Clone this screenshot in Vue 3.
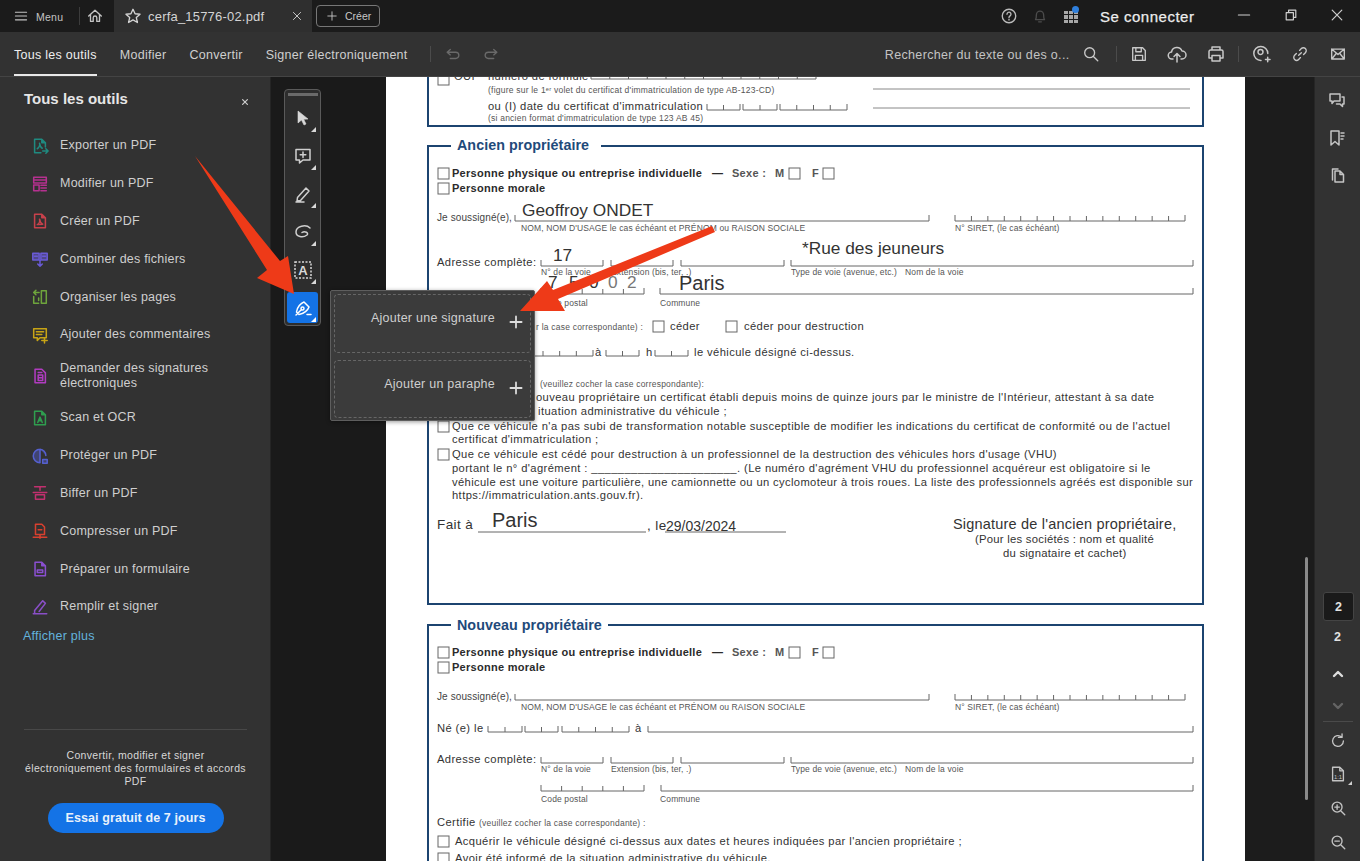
<script setup>
// stroke paths on a 20x20 grid
const icons = {
  home: 'M3 10L10 3.5L17 10M5 8.5V16H8V12a2 2 0 0 1 4 0V16H15V8.5',
  star: 'M10 2.5L12.3 7.5L17.8 8.1L13.7 11.8L14.9 17.2L10 14.4L5.1 17.2L6.3 11.8L2.2 8.1L7.7 7.5Z',
  close: 'M4 4L16 16M16 4L4 16',
  plus: 'M10 3V17M3 10H17',
  menu: 'M2 4.5H18M2 10H18M2 15.5H18',
  help: 'M10 2.5a7.5 7.5 0 1 0 0 15a7.5 7.5 0 1 0 0-15ZM7.8 8a2.2 2.2 0 1 1 3.4 1.8c-.8.5-1.2 1-1.2 1.8M10 13.6v.8',
  bell: 'M5 14c1-1.5 1-3 1-5.5a4 4 0 0 1 8 0c0 2.5 0 4 1 5.5ZM8.5 16.5h3',
  min: 'M3 10H17',
  restore: 'M4 7H13V16H4ZM7 7V4H16V13H13',
  undo: 'M7 5L3.5 8L7 11M3.5 8H13a3.5 3.5 0 0 1 0 7H7',
  redo: 'M13 5L16.5 8L13 11M16.5 8H7a3.5 3.5 0 0 0 0 7H13',
  search: 'M8.5 3a5.5 5.5 0 1 0 0 11a5.5 5.5 0 1 0 0-11ZM12.7 12.7L17.5 17.5',
  save: 'M3 3H14L17 6V17H3ZM6.5 3V7.5H12.5V3M6 17V11.5H14V17',
  cloud: 'M6 15H5a3.5 3.5 0 0 1-.5-7A5.5 5.5 0 0 1 15 7a4 4 0 0 1 0 8h-1M10 18V10M7 12.5L10 9.5L13 12.5',
  print: 'M6 6V3H14V6M6 14H3V7.5A1.5 1.5 0 0 1 4.5 6H15.5A1.5 1.5 0 0 1 17 7.5V14H14M6 11.5H14V17H6Z',
  share: 'M10 16.4a7 7 0 1 1 6.8-7M9.5 5.5a2.5 2.5 0 1 0 0 5a2.5 2.5 0 1 0 0-5ZM14.5 15.5H19M16.7 13.2V17.8',
  link: 'M8.5 11.5L11.5 8.5M9.5 6L11.5 4a3 3 0 0 1 4.5 4.5L14 10.5M10.5 14L8.5 16a3 3 0 0 1-4.5-4.5L6 9.5',
  mail: 'M3 4.5H17V15.5H3ZM3 4.5L10 10.5L17 4.5M3 15.5L8 9.5M17 15.5L12 9.5',
  comments: 'M3 3H13V10H7L5 12.5V10H3ZM15 6H17V13H15.5V15.5L13 13H9.5',
  bookmarks: 'M4 3H12V17L8 13.5L4 17ZM14 5H17M14 8H17M14 11H16',
  pages: 'M8 6H13L16.5 9.5V17H8ZM13 6V9.5H16.5M5.5 15V4H11',
  up: 'M5 12.5L10 7.5L15 12.5',
  down: 'M5 7.5L10 12.5L15 7.5',
  refresh: 'M16 10a6 6 0 1 1-2-4.5M14.5 2V6H10.5',
  fit: 'M4 2.5H12L16 6.5V17.5H4ZM12 2.5V6.5H16',
  zoomIn: 'M9 3.5a5.5 5.5 0 1 0 0 11a5.5 5.5 0 1 0 0-11ZM13 13L17.5 17.5M6.5 9H11.5M9 6.5V11.5',
  zoomOut: 'M9 3.5a5.5 5.5 0 1 0 0 11a5.5 5.5 0 1 0 0-11ZM13 13L17.5 17.5M6.5 9H11.5',
  comment: 'M3 3.5H17V14H10L6.5 17V14H3ZM10 6V11.5M7.2 8.7H12.8',
  pen: 'M4.5 13.5L13 4L16 7L7.5 16.5L4 17ZM3 18H11',
  lasso: 'M17 6C13 2 3 4 3 10C3 15 10 16 14 13C16 11 12 8.5 9 10.5',
  sign: 'M3.5 14C4 9 8 5 11 4L16 9C15 12 11 16 6 16.5ZM3 17L8.5 11.5M9.5 9a1.5 1.5 0 1 0 0 3a1.5 1.5 0 1 0 0-3ZM14 16.5H18'
}

const tools = [
  { label: 'Exporter un PDF', color: '#1f8a80', d: 'M4 2.5H12L16 6.5V11M12 2.5V6.5H16M4 2.5V17.5H11M7 13c2-1 3-4 2.5-6c.5 3 2 5 3 5.5M13 15.5H19M16.5 13L19 15.5L16.5 18' },
  { label: 'Modifier un PDF', color: '#b5318f', d: 'M3 2.5H17V9H3ZM3 11H9V17.5H3ZM11 11.5H17M11 14.5H17M11 17.5H17M3 5.5H17' },
  { label: 'Créer un PDF', color: '#c8414b', d: 'M4 2.5H12L16 6.5V17.5H4ZM12 2.5V6.5H16M7 14c2-1 3-4 2.5-6c.5 3 2 5 3.5 5.5Z' },
  { label: 'Combiner des fichiers', color: '#6a5bd6', tint: 'rgba(106, 91, 214, .55)', d: 'M2 3.5H9V11H2ZM11 3.5H18V11H11ZM4 7H7M13 7H16M10 12V18M7.5 15.5L10 18L12.5 15.5' },
  { label: 'Organiser les pages', color: '#6ea53c', d: 'M11.5 3H17V17H11.5ZM9 5H3M5.5 2.5L3 5L5.5 7.5M3 9.5V17H8.5M8.5 14V11' },
  { label: 'Ajouter des commentaires', color: '#c8a415', d: 'M3 3H17V13H10L7 16V13H3ZM6 6.5H14M6 9.5H12M15 13V19M12 16H18' },
  { label: 'Demander des signatures électroniques', color: '#b13cc0', d: 'M4.5 2.5H12L16 6.5V17.5H4.5ZM8 6H12M8 9H13V15H8ZM8 12H13' },
  { label: 'Scan et OCR', color: '#2f9e4f', d: 'M4 2.5H12L16 6.5V17.5H4ZM12 2.5V6.5H16M7.5 15L10 9L12.5 15M8.5 13H11.5' },
  { label: 'Protéger un PDF', color: '#5560d0', tint: 'rgba(85, 96, 208, .4)', d: 'M10 2.5a7.5 7.5 0 1 0 0 15M10 2.5V17.5M10 2.5a7 7 0 0 1 6.5 7M13 14H18V18H13Z' },
  { label: 'Biffer un PDF', color: '#c2306f', d: 'M4 3H16M10 3V7M2.5 9.5H17.5M5 12H15V17H5Z' },
  { label: 'Compresser un PDF', color: '#d8402f', d: 'M5 2.5H12L15 5.5V14H5ZM8 8.5H12M2.5 17H17.5M10 14V18' },
  { label: 'Préparer un formulaire', color: '#8a4fd0', d: 'M4.5 2.5H12L16 6.5V17.5H4.5ZM12 2.5V6.5H16M7 11H13V14H7Z' },
  { label: 'Remplir et signer', color: '#8a4fc8', d: 'M2.5 17.5H17.5M4 14L13 3L16 6L9 15M4 14V17' }
]

const dockTools = ['cursor', 'comment', 'pen', 'lasso', 'text', 'sign']

// comb fields of the form: x1, x2, y, number of cells
const combs = [
  [591, 816, 79, 12],
  [707, 740, 110, 2], [743, 777, 110, 2], [780, 847, 110, 4],
  [515, 929, 221, 1], [955, 1185, 221, 14],
  [541, 603, 266, 1], [611, 673, 266, 1], [681, 784, 266, 1], [791, 1193, 266, 1],
  [541, 644, 294, 5], [660, 1193, 294, 1],
  [493, 593, 356, 6], [606, 639, 356, 2], [655, 688, 356, 2],
  [515, 929, 700, 1], [955, 1185, 700, 14],
  [488, 522, 732, 2], [525, 558, 732, 2], [562, 629, 732, 4], [648, 1193, 732, 1],
  [541, 603, 763, 1], [611, 673, 763, 1], [681, 784, 763, 1], [791, 1193, 763, 1],
  [541, 644, 791, 5], [661, 1193, 791, 1]
]

const combPath = combs.map(([a, b, y, n]) => {
  let d = `M${a} ${y - 6}V${y}H${b}V${y - 6}`
  for (let i = 1; i < n; i++) {
    const x = a + ((b - a) * i) / n
    d += `M${x} ${y - 5}V${y}`
  }
  return d
}).join('')

const boxes = [
  [438, 74], [438, 168], [438, 183], [789, 168], [823, 168],
  [653, 321], [726, 321], [438, 421], [438, 449],
  [438, 647], [438, 662], [789, 647], [823, 647], [438, 836], [438, 853]
]

// x, vertical centre of the line, text, style
const texts = [
  [454, 76, 'OUI', 'n'],
  [488, 76, 'numéro de formule', 'n'],
  [488, 90, "(figure sur le 1ᵉʳ volet du certificat d'immatriculation de type AB-123-CD)", 's sl'],
  [488, 106, "ou (I) date du certificat d'immatriculation", 'n'],
  [488, 118, "(si ancien format d'immatriculation de type 123 AB 45)", 's sl'],
  [457, 145, 'Ancien propriétaire', 'title'],
  [452, 173, 'Personne physique ou entreprise individuelle', 'b'],
  [712, 173, '—', 'b'], [732, 173, 'Sexe :', 'b grey'], [775, 173, 'M', 'b grey'], [812, 173, 'F', 'b grey'],
  [452, 188, 'Personne morale', 'b'],
  [437, 217, 'Je soussigné(e),', 'm'],
  [522, 210, 'Geoffroy ONDET', 'fill'],
  [521, 228, "NOM, NOM D'USAGE le cas échéant et PRÉNOM ou RAISON SOCIALE", 's'],
  [955, 228, 'N° SIRET, (le cas échéant)', 's'],
  [437, 262, 'Adresse complète:', 'n'],
  [553, 255, '17', 'fill'],
  [802, 248, '*Rue des jeuneurs', 'fill'],
  [541, 272, 'N° de la voie', 's'], [611, 272, 'Extension (bis, ter, .)', 's'],
  [791, 272, 'Type de voie (avenue, etc.)', 's'], [905, 272, 'Nom de la voie', 's'],
  [548, 282, '7', 'fill'], [569, 282, '5', 'fill'], [589, 282, '0', 'fill'], [608, 282, '0', 'fill soft'], [627, 282, '2', 'fill soft'],
  [679, 283, 'Paris', 'fill big'],
  [541, 303, 'Code postal', 's'], [660, 303, 'Commune', 's'],
  [536, 327, 'r la case correspondante) :', 's sl'],
  [670, 326, 'céder', 'n'], [744, 326, 'céder pour destruction', 'n'],
  [595, 352, 'à', 'n'], [646, 352, 'h', 'n'], [694, 352, 'le véhicule désigné ci-dessus.', 'n'],
  [540, 384, '(veuillez cocher la case correspondante):', 's sl'],
  [536, 397, "ouveau propriétaire un certificat établi depuis moins de quinze jours par le ministre de l'Intérieur, attestant à sa date", 'n'],
  [538, 411, 'ituation administrative du véhicule ;', 'n'],
  [452, 426, "Que ce véhicule n'a pas subi de transformation notable susceptible de modifier les indications du certificat de conformité ou de l'actuel", 'n'],
  [452, 439, "certificat d'immatriculation ;", 'n'],
  [452, 454, "Que ce véhicule est cédé pour destruction à un professionnel de la destruction des véhicules hors d'usage (VHU)", 'n'],
  [452, 468, "portant le n° d'agrément : ______________________. (Le numéro d'agrément VHU du professionnel acquéreur est obligatoire si le", 'n'],
  [452, 482, 'véhicule est une voiture particulière, une camionnette ou un cyclomoteur à trois roues. La liste des professionnels agréés est disponible sur', 'n tight'],
  [452, 495, 'https://immatriculation.ants.gouv.fr).', 'n'],
  [437, 525, 'Fait à', 'fait'],
  [492, 520, 'Paris', 'fill big'],
  [647, 526, ', le', 'fait'],
  [666, 526, '29/03/2024', 'date'],
  [953, 524, "Signature de l'ancien propriétaire,", 'sig'],
  [975, 539, '(Pour les sociétés : nom et qualité', 'sig2'],
  [1003, 553, 'du signataire et cachet)', 'sig2'],
  [457, 625, 'Nouveau propriétaire', 'title'],
  [452, 652, 'Personne physique ou entreprise individuelle', 'b'],
  [712, 652, '—', 'b'], [732, 652, 'Sexe :', 'b grey'], [775, 652, 'M', 'b grey'], [812, 652, 'F', 'b grey'],
  [452, 667, 'Personne morale', 'b'],
  [437, 696, 'Je soussigné(e),', 'm'],
  [521, 707, "NOM, NOM D'USAGE le cas échéant et PRÉNOM ou RAISON SOCIALE", 's'],
  [955, 707, 'N° SIRET, (le cas échéant)', 's'],
  [437, 728, 'Né (e) le', 'n'],
  [635, 728, 'à', 'n'],
  [437, 759, 'Adresse complète:', 'n'],
  [541, 769, 'N° de la voie', 's'], [611, 769, 'Extension (bis, ter, .)', 's'],
  [791, 769, 'Type de voie (avenue, etc.)', 's'], [905, 769, 'Nom de la voie', 's'],
  [541, 799, 'Code postal', 's'], [660, 799, 'Commune', 's'],
  [437, 822, 'Certifie', 'n'],
  [479, 823, '(veuillez cocher la case correspondante) :', 's sl'],
  [455, 841, "Acquérir le véhicule désigné ci-dessus aux dates et heures indiquées par l'ancien propriétaire ;", 'n'],
  [455, 858, 'Avoir été informé de la situation administrative du véhicule.', 'n']
]
</script>

<template>
  <div class="app">
    <header class="titlebar">
      <div class="menu">
        <svg class="ic i14" viewBox="0 0 20 20"><path :d="icons.menu" /></svg>
        <span>Menu</span>
      </div>
      <div class="home"><svg class="ic i18" viewBox="0 0 20 20"><path :d="icons.home" /></svg></div>
      <div class="tab">
        <svg class="ic i18" viewBox="0 0 20 20"><path :d="icons.star" /></svg>
        <span class="tab-name">cerfa_15776-02.pdf</span>
        <svg class="ic i12 tab-x" viewBox="0 0 20 20"><path :d="icons.close" /></svg>
      </div>
      <button class="create">
        <svg class="ic i12" viewBox="0 0 20 20"><path :d="icons.plus" /></svg>
        <span>Créer</span>
      </button>
      <div class="title-right">
        <div class="tb-ic"><svg class="ic i18" viewBox="0 0 20 20"><path :d="icons.help" /></svg></div>
        <div class="tb-ic dim"><svg class="ic i18" viewBox="0 0 20 20"><path :d="icons.bell" /></svg></div>
        <div class="tb-ic">
          <span class="apps">
            <i v-for="n in 9" :key="n"></i>
            <b></b>
          </span>
        </div>
        <div class="signin">Se connecter</div>
        <div class="win"><svg class="ic i16" viewBox="0 0 20 20"><path :d="icons.min" /></svg></div>
        <div class="win"><svg class="ic i16" viewBox="0 0 20 20"><path :d="icons.restore" /></svg></div>
        <div class="win last"><svg class="ic i16" viewBox="0 0 20 20"><path :d="icons.close" /></svg></div>
      </div>
    </header>

    <nav class="toolbar">
      <a class="nav active">Tous les outils</a>
      <a class="nav">Modifier</a>
      <a class="nav">Convertir</a>
      <a class="nav">Signer électroniquement</a>
      <span class="tsep first"></span>
      <div class="tbtn dim"><svg class="ic i18" viewBox="0 0 20 20"><path :d="icons.undo" /></svg></div>
      <div class="tbtn dim"><svg class="ic i18" viewBox="0 0 20 20"><path :d="icons.redo" /></svg></div>
      <div class="tool-right">
        <span class="find">Rechercher du texte ou des o...</span>
        <div class="tbtn s30"><svg class="ic i18" viewBox="0 0 20 20"><path :d="icons.search" /></svg></div>
        <span class="tsep"></span>
        <div class="tbtn"><svg class="ic i18" viewBox="0 0 20 20"><path :d="icons.save" /></svg></div>
        <div class="tbtn"><svg class="ic i20" viewBox="0 0 20 20"><path :d="icons.cloud" /></svg></div>
        <div class="tbtn"><svg class="ic i20" viewBox="0 0 20 20"><path :d="icons.print" /></svg></div>
        <span class="tsep"></span>
        <div class="tbtn"><svg class="ic i20" viewBox="0 0 20 20"><path :d="icons.share" /></svg></div>
        <div class="tbtn"><svg class="ic i18" viewBox="0 0 20 20"><path :d="icons.link" /></svg></div>
        <div class="tbtn"><svg class="ic i18" viewBox="0 0 20 20"><path :d="icons.mail" /></svg></div>
      </div>
    </nav>

    <main class="body">
      <aside class="panel">
        <div class="panel-head">
          <h2>Tous les outils</h2>
          <svg class="ic i8 thick" viewBox="0 0 20 20"><path :d="icons.close" /></svg>
        </div>
        <ul class="tool-list">
          <li v-for="tool in tools" :key="tool.label" class="tool-row">
            <svg class="ic i18 tool-ic" viewBox="0 0 20 20" :style="{ color: tool.color, fill: tool.tint }"><path :d="tool.d" /></svg>
            <span>{{ tool.label }}</span>
          </li>
        </ul>
        <a class="more">Afficher plus</a>
        <div class="promo">
          <p>Convertir, modifier et signer<br />électroniquement des formulaires et accords<br />PDF</p>
          <button class="trial">Essai gratuit de 7 jours</button>
        </div>
      </aside>

      <section class="gutter">
        <div class="dock">
          <div class="grip"></div>
          <div v-for="t in dockTools" :key="t" class="dock-btn" :class="{ on: t === 'sign' }">
            <svg v-if="t === 'cursor'" class="i20" viewBox="0 0 20 20"><path class="solid" d="M5 3V15L8.5 12L11 17L13 16L10.7 11.3L15 11Z" /></svg>
            <svg v-else-if="t === 'text'" class="i20" viewBox="0 0 20 20">
              <rect class="dashed" x="2" y="2" width="16" height="16" />
              <text x="10" y="15" text-anchor="middle" class="dock-a">A</text>
            </svg>
            <svg v-else class="ic i20" viewBox="0 0 20 20"><path :d="icons[t]" /></svg>
          </div>
        </div>
      </section>

      <section class="page">
        <svg class="page-lines" viewBox="386 77 859 784">
          <path class="frame" d="M428 70V126H1203V70" />
          <path class="frame" d="M451 146H428V604H1203V146H601" />
          <path class="frame" d="M451 625H428V870M1203 870V625H608" />
          <path class="rule" d="M873 89H1190M873 108H1190" />
          <path class="comb" :d="combPath" />
          <path class="comb" d="M478 532H646M665 532H786" />
          <rect v-for="b in boxes" :key="b.join()" class="box" :x="b[0]" :y="b[1]" width="11" height="11" />
        </svg>
        <span
          v-for="t in texts"
          :key="t[0] + '-' + t[1] + t[2]"
          class="pt"
          :class="t[3]"
          :style="{ left: t[0] - 386 + 'px', top: t[1] - 77 + 'px' }"
        >{{ t[2] }}</span>
      </section>

      <section class="gutter-right"><div class="thumb"></div></section>

      <aside class="rail">
        <div class="rail-btn"><svg class="ic i20" viewBox="0 0 20 20"><path :d="icons.comments" /></svg></div>
        <div class="rail-btn"><svg class="ic i20" viewBox="0 0 20 20"><path :d="icons.bookmarks" /></svg></div>
        <div class="rail-btn"><svg class="ic i20" viewBox="0 0 20 20"><path :d="icons.pages" /></svg></div>
        <div class="page-no">2</div>
        <div class="page-total">2</div>
        <div class="rail-small"><svg class="ic i16 thick" viewBox="0 0 20 20"><path :d="icons.up" /></svg></div>
        <div class="rail-small dimmer"><svg class="ic i16 thick" viewBox="0 0 20 20"><path :d="icons.down" /></svg></div>
        <div class="rail-sep"></div>
        <div class="rail-tool"><svg class="ic i18" viewBox="0 0 20 20"><path :d="icons.refresh" /></svg></div>
        <div class="rail-tool tri">
          <svg class="ic i18" viewBox="0 0 20 20">
            <path :d="icons.fit" />
            <text x="10" y="15" text-anchor="middle" class="fit-txt">1:1</text>
          </svg>
        </div>
        <div class="rail-tool"><svg class="ic i18" viewBox="0 0 20 20"><path :d="icons.zoomIn" /></svg></div>
        <div class="rail-tool"><svg class="ic i18" viewBox="0 0 20 20"><path :d="icons.zoomOut" /></svg></div>
      </aside>
    </main>

    <div class="popup">
      <div class="pop-row">
        <span>Ajouter une signature</span>
        <svg class="ic i16 pop-plus" viewBox="0 0 20 20"><path :d="icons.plus" /></svg>
      </div>
      <div class="pop-row">
        <span>Ajouter un paraphe</span>
        <svg class="ic i16 pop-plus" viewBox="0 0 20 20"><path :d="icons.plus" /></svg>
      </div>
    </div>

    <svg class="arrows" viewBox="0 0 1360 861">
      <polygon points="195,156 280,261 288,256 294,294 257,278 267,270" />
      <polygon points="712,226 553,290 547,281 520,311 565,311 558,299 715,232" />
    </svg>
  </div>
</template>

<style>
html, body { margin: 0; background: #1a1a1a; }
</style>

<style scoped>
* { box-sizing: border-box; }

.app {
  position: relative;
  width: 1360px;
  height: 861px;
  overflow: hidden;
  display: flex;
  flex-direction: column;
  background: #1a1a1a;
  color: #d6d6d6;
  font-family: "Liberation Sans", Arial, sans-serif;
}

/* icons */
.ic { fill: none; stroke: currentColor; stroke-width: 1.5; stroke-linecap: round; stroke-linejoin: round; flex: none; display: block; }
.thick { stroke-width: 3; }
.i8 { width: 8px; height: 8px; }
.i12 { width: 12px; height: 12px; }
.i14 { width: 14px; height: 14px; }
.i16 { width: 16px; height: 16px; }
.i18 { width: 18px; height: 18px; }
.i20 { width: 20px; height: 20px; }
.dim { color: #6f6f6f; }

/* title bar */
.titlebar { height: 32px; flex: none; display: flex; align-items: center; background: #1b1b1b; font-size: 10.5px; }
.menu { width: 80px; height: 18px; padding-left: 14px; display: flex; align-items: center; gap: 8px; border-right: 1px solid #3c3c3c; color: #c4c4c4; letter-spacing: .25px; }
.menu span { margin-top: 1px; }
.home { width: 34px; padding-right: 4px; display: flex; justify-content: center; color: #c4c4c4; }
.tab { width: 198px; height: 32px; padding: 0 9px 0 10px; background: #2f2f2f; display: flex; align-items: center; color: #d4d4d4; }
.tab-name { margin-left: 6px; font-size: 13px; letter-spacing: .2px; }
.tab-x { margin-left: auto; }
.create { margin-left: 4px; width: 64px; height: 22px; padding: 0 0 0 9px; display: flex; align-items: center; gap: 7px; background: none; border: 1px solid #777; border-radius: 4px; color: #c8c8c8; font: inherit; }
.title-right { margin-left: auto; display: flex; align-items: center; }
.tb-ic { width: 31px; display: flex; justify-content: center; color: #bbb; }
.tb-ic.dim { color: #4c4c4c; }
.apps { position: relative; width: 14px; height: 12px; display: grid; grid-template-columns: repeat(3, 4px); gap: 1px; margin-top: 2px; }
.apps i { background: #a8a8a8; display: block; }
.apps b { position: absolute; right: -1px; top: -5px; width: 7px; height: 7px; border-radius: 50%; background: #2f7fdc; }
.signin { margin-left: 13.5px; width: 120.5px; font-size: 15px; letter-spacing: .5px; font-weight: 400; color: #ededed; -webkit-text-stroke: .25px #ededed; }
.win { width: 47px; display: flex; justify-content: center; color: #cfcfcf; margin-top: -2px; }
.win.last { width: 45.5px; }

/* tool bar */
.toolbar { height: 45px; flex: none; display: flex; align-items: center; padding: 0 2.5px 0 14px; background: #323232; border-bottom: 1px solid #444; font-size: 12.5px; color: #cfcfcf; }
.nav { height: 44px; padding-top: 2px; display: flex; align-items: center; margin-right: 23px; letter-spacing: .28px; }
.nav.active { color: #eee; box-shadow: inset 0 -2px 0 #e8e8e8; }
.tsep { width: 1px; height: 16px; background: #4b4b4b; flex: none; margin: 0 3px; }
.tsep.first { margin: 0 3px 0 -1px; }
.tbtn { width: 38.5px; display: flex; justify-content: center; color: #c8c8c8; }
.tbtn.dim { color: #6a6a6a; }
.tbtn.s30 { width: 30px; margin-right: 7px; margin-left: 6px; }
.tool-right { margin-left: auto; display: flex; align-items: center; }
.find { letter-spacing: .33px; color: #c4c4c4; padding-top: 2px; }

/* body */
.body { flex: 1; min-height: 0; display: flex; }

.panel { width: 271px; flex: none; display: flex; flex-direction: column; background: #323232; border-right: 1px solid #252525; }
.panel-head { height: 50px; padding: 14px 21px 0 24px; display: flex; justify-content: space-between; }
.panel-head h2 { margin: 0; font-size: 15px; line-height: 16px; font-weight: 700; color: #e6e6e6; }
.panel-head .ic { margin-top: 7px; color: #ccc; }
.tool-list { list-style: none; margin: 0; padding: 0; }
.tool-row { min-height: 37.8px; padding: 7.6px 30px 7.6px 31px; display: flex; align-items: center; gap: 11px; font-size: 12.5px; line-height: 15px; letter-spacing: .22px; color: #cfcfcf; }
.tool-ic { stroke-width: 1.7; }
.more { margin: 3px 0 0 23px; font-size: 12.5px; line-height: 15px; letter-spacing: .25px; color: #63b3dd; }
.promo { margin-top: auto; margin-left: 24px; margin-right: 23px; height: 132px; border-top: 1px solid #484848; display: flex; flex-direction: column; align-items: center; padding-top: 19px; }
.promo p { margin: 0; text-align: center; font-size: 10.5px; line-height: 13px; color: #d8d8d8; letter-spacing: .33px; white-space: nowrap; }
.trial { margin-top: 15px; width: 176px; height: 30px; border: 0; border-radius: 15px; background: #1473e6; color: #e9f1fb; font: 700 12.5px "Liberation Sans", Arial, sans-serif; letter-spacing: .1px; }

.gutter { width: 115px; flex: none; padding: 12px 0 0 13px; background: #1a1a1a; }
.dock { width: 37px; height: 237px; padding: 3px 2px 0; display: flex; flex-direction: column; align-items: center; gap: 7px; background: #2d2d2d; border: 1px solid #5a5a5a; border-radius: 4px; }
.grip { width: 30px; height: 3px; margin-bottom: -1px; background: #6a6a6a; flex: none; }
.dock-btn { position: relative; width: 31px; height: 31px; flex: none; display: flex; align-items: center; justify-content: center; color: #cfcfcf; border-radius: 3px; }
.dock-btn::after { content: ""; position: absolute; right: 2px; bottom: 1px; border-left: 5px solid transparent; border-bottom: 5px solid #d8d8d8; }
.dock-btn.on { background: #1473e6; color: #fff; }
.dock-btn.on::after { border-bottom-color: #fff; }
.solid { fill: #d8d8d8; stroke: #d8d8d8; stroke-width: .6; }
.dashed { fill: none; stroke: #d8d8d8; stroke-width: 1.5; stroke-dasharray: 2 1.5; }
.dock-a { fill: #d8d8d8; font: 700 13px "Liberation Sans", Arial, sans-serif; }

.page { position: relative; width: 859px; flex: none; overflow: hidden; background: #fff; }
.page-lines { position: absolute; inset: 0; width: 859px; height: 784px; display: block; }
.frame { fill: none; stroke: #1c4470; stroke-width: 2; }
.rule { fill: none; stroke: #888; stroke-width: 1; }
.comb { fill: none; stroke: #666; stroke-width: 1; }
.box { fill: #fff; stroke: #666; stroke-width: 1; }

.pt { position: absolute; transform: translateY(-50%); white-space: nowrap; line-height: 1; color: #333; }
.n { font-size: 11.2px; letter-spacing: .4px; margin-top: 1px; }
.tight { letter-spacing: .37px; }
.m { font-size: 10px; letter-spacing: .1px; color: #444; margin-top: 1px; }
.s { font-size: 8.5px; color: #555; letter-spacing: .13px; }
.sl { letter-spacing: .22px; }
.b { font-size: 11px; font-weight: 700; letter-spacing: .28px; color: #2b2b2b; }
.grey { color: #555; }
.title { font-size: 14.3px; font-weight: 700; color: #1f4a7a; letter-spacing: .05px; }
.fill { font-size: 17.3px; color: #333; margin-top: 1px; }
.big { font-size: 20px; margin-top: 0; }
.soft { color: #777; }
.fait { font-size: 13.5px; letter-spacing: .4px; }
.date { font-size: 14px; }
.sig { font-size: 14.5px; letter-spacing: .2px; }
.sig2 { font-size: 11.3px; letter-spacing: .25px; margin-top: 1px; }

.gutter-right { width: 69px; flex: none; padding: 480px 0 0 60px; background: #1c1c1c; }
.thumb { width: 3px; height: 243px; background: #8a8a8a; border-radius: 2px; }

.rail { width: 46px; flex: none; display: flex; flex-direction: column; align-items: center; padding-top: 5px; background: #323232; border-left: 1px solid #262626; color: #c4c4c4; }
.rail-btn { height: 37px; flex: none; display: flex; align-items: center; margin-left: -1px; }
.page-no { margin-top: 399px; margin-left: 2px; width: 31px; height: 29px; flex: none; display: flex; align-items: center; justify-content: center; background: #1a1a1a; border: 1px solid #444; border-radius: 3px; font-size: 12.5px; font-weight: 700; color: #e2e2e2; }
.page-total { margin-top: 7px; margin-bottom: 6px; height: 17px; flex: none; display: flex; align-items: center; font-size: 12.5px; font-weight: 700; color: #e2e2e2; }
.rail-small { margin-top: 13px; height: 19px; flex: none; display: flex; align-items: center; color: #ddd; }
.dimmer { color: #646464; }
.rail-sep { margin-top: 6px; width: 30px; height: 1px; flex: none; background: #4a4a4a; }
.rail-tool { position: relative; height: 33.6px; flex: none; display: flex; align-items: center; }
.rail-sep + .rail-tool { margin-top: 2px; }
.tri::after { content: ""; position: absolute; right: -5px; bottom: 6px; border-left: 4px solid transparent; border-bottom: 4px solid #d0d0d0; }
.fit-txt { font: 400 6.5px "Liberation Sans", Arial, sans-serif; fill: currentColor; stroke: none; }

/* signature menu, opens over the page */
.popup { position: absolute; left: 330px; top: 290px; width: 205px; height: 131px; padding: 3px; display: flex; flex-direction: column; gap: 7px; background: #3b3b3b; border: 1px solid #5e5e5e; border-radius: 2px; box-shadow: 0 1px 4px rgba(0, 0, 0, .4); }
.pop-row { height: 58.5px; flex: none; padding: 16px 6px 0 0; display: flex; justify-content: flex-end; gap: 13px; border: 1px dashed #666; border-radius: 4px; font-size: 12.5px; line-height: 15px; letter-spacing: .25px; color: #cfcfcf; }
.pop-plus { margin-top: 3px; color: #ddd; stroke-width: 2.2; }

.arrows { position: absolute; inset: 0; width: 1360px; height: 861px; pointer-events: none; }
.arrows polygon { fill: #ee3a18; }
</style>
